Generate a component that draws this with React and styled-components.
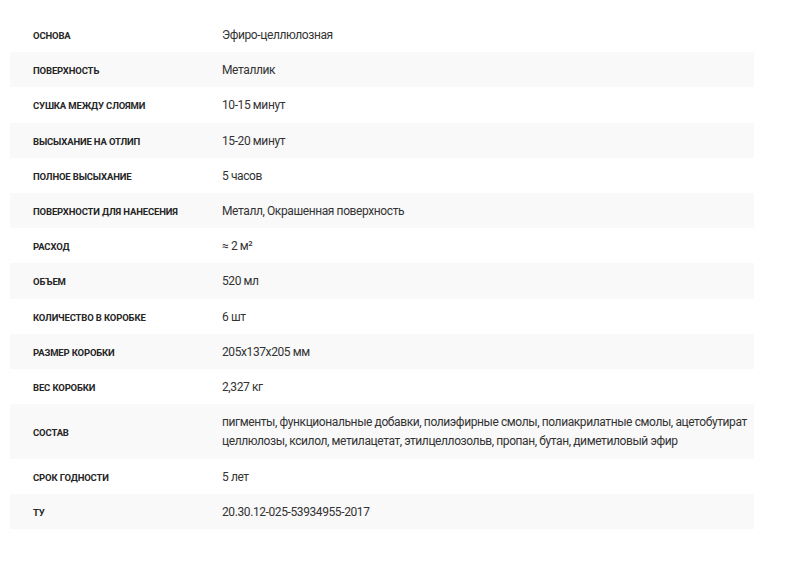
import styled, {createGlobalStyle} from "styled-components";

const specs = [
    ["Основа", "Эфиро-целлюлозная"],
    ["Поверхность", "Металлик"],
    ["Сушка между слоями", "10-15 минут"],
    ["Высыхание на отлип", "15-20 минут"],
    ["Полное высыхание", "5 часов"],
    ["Поверхности для нанесения", "Металл, Окрашенная поверхность"],
    ["Расход", "≈ 2 м²"],
    ["Объем", "520 мл"],
    ["Количество в коробке", "6 шт"],
    ["Размер коробки", "205x137x205 мм"],
    ["Вес коробки", "2,327 кг"],
    ["Состав", "пигменты, функциональные добавки, полиэфирные смолы, полиакрилатные смолы, ацетобутират целлюлозы, ксилол, метилацетат, этилцеллозольв, пропан, бутан, диметиловый эфир"],
    ["Срок годности", "5 лет"],
    ["ТУ", "20.30.12-025-53934955-2017"],
];

const GlobalStyle = createGlobalStyle`
    body {
        margin: 0;
        background: #fff;
        font-family: Roboto, "Liberation Sans", sans-serif;
        color: #333;
    }
`;

const Page = styled.div`
    padding: 17px 38px 0 10px;
`;

const SpecTable = styled.div`
    display: flex;
    flex-direction: column;
    width: 744px;
`;

const Row = styled.div`
    display: grid;
    grid-template-columns: 189px 1fr;
    align-items: center;
    background: ${props => props.$striped ? "#f9f9f9" : "#fff"};
`;

const Label = styled.div`
    padding: 9px 10px 7px 23px;
    font-size: 9.5px;
    font-weight: 700;
    letter-spacing: -0.15px;
    text-transform: uppercase;
    color: #262626;
    line-height: 19.2px;
`;

const Value = styled.div`
    padding: 9px 0 7px 23px;
    font-size: 12px;
    letter-spacing: -0.4px;
    line-height: 19.2px;
    color: #333;
`;

export default function App() {
    return (
        <Page>
            <GlobalStyle/>
            <SpecTable>
                {specs.map(([label, value], i) => (
                    <Row key={label} $striped={i % 2 === 1}>
                        <Label>{label}</Label>
                        <Value>{value}</Value>
                    </Row>
                ))}
            </SpecTable>
        </Page>
    );
}
